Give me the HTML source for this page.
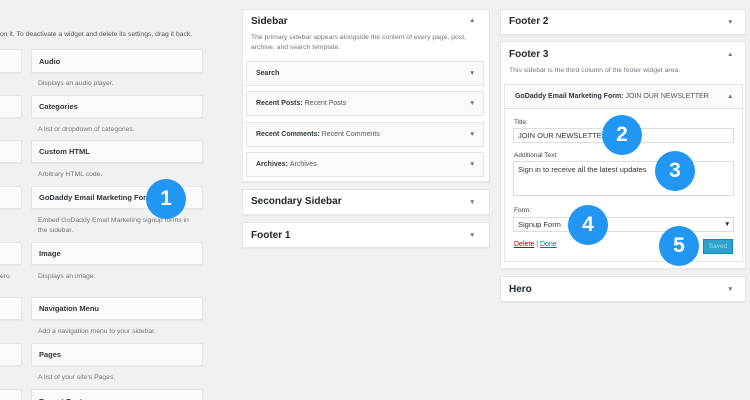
<!DOCTYPE html><html style="overflow:hidden;height:400px"><head><style>
*{box-sizing:border-box;margin:0;padding:0}
body{width:750px;height:400px;background:#f1f1f1;font-family:"Liberation Sans",sans-serif;position:relative;overflow:hidden;color:#23282d}
.a{position:absolute}
.wb{position:absolute;background:#fafafa;border:1px solid #e5e5e5;box-shadow:0 1px 1px rgba(0,0,0,.04);font-size:7.5px;font-weight:bold;color:#32373c;padding-left:7px;display:flex;align-items:center}
.d{position:absolute;font-size:6.8px;color:#72777c;line-height:10px}
.p{position:absolute;background:#fff;border:1px solid #e5e5e5;box-shadow:0 1px 1px rgba(0,0,0,.04)}
.h{position:absolute;font-size:10px;font-weight:bold;color:#23282d}
.ar{position:absolute;font-size:6.5px;color:#72777c}
.ib{position:absolute;background:#fafafa;border:1px solid #e5e5e5;font-size:7px;font-weight:bold;color:#32373c;padding-left:9px;display:flex;align-items:center}
.ib span{font-weight:normal;color:#555}
.c{position:absolute;width:40px;height:40px;border-radius:50%;background:#2196f3;color:#fff;font-weight:bold;font-size:21px;display:flex;align-items:center;justify-content:center}
.lbl{position:absolute;font-size:6.5px;color:#444}
.inp{position:absolute;background:#fff;border:1px solid #ddd;font-size:7.5px;color:#333;padding:3px 4px}
</style></head><body>
<div class="d" style="left:0;top:30px;color:#555">on it. To deactivate a widget and delete its settings, drag it back.</div>
<div class="wb" style="left:-5px;top:49px;width:27px;height:24px"></div>
<div class="wb" style="left:-5px;top:95px;width:27px;height:23px"></div>
<div class="wb" style="left:-5px;top:140px;width:27px;height:23px"></div>
<div class="wb" style="left:-5px;top:186px;width:27px;height:23px"></div>
<div class="wb" style="left:-5px;top:242px;width:27px;height:23px"></div>
<div class="d" style="left:0;top:272px">ero</div>
<div class="wb" style="left:-5px;top:297px;width:27px;height:23px"></div>
<div class="wb" style="left:-5px;top:343px;width:27px;height:23px"></div>
<div class="wb" style="left:-5px;top:389px;width:27px;height:23px"></div>
<div class="wb" style="left:31px;top:49px;width:172px;height:24px">Audio</div>
<div class="d" style="left:38px;top:79px">Displays an audio player.</div>
<div class="wb" style="left:31px;top:95px;width:172px;height:23px">Categories</div>
<div class="d" style="left:38px;top:125px">A list or dropdown of categories.</div>
<div class="wb" style="left:31px;top:140px;width:172px;height:23px">Custom HTML</div>
<div class="d" style="left:38px;top:170px">Arbitrary HTML code.</div>
<div class="wb" style="left:31px;top:186px;width:172px;height:23px">GoDaddy Email Marketing Form</div>
<div class="d" style="left:38px;top:216px;width:162px">Embed GoDaddy Email Marketing signup forms in the sidebar.</div>
<div class="wb" style="left:31px;top:242px;width:172px;height:23px">Image</div>
<div class="d" style="left:38px;top:272px">Displays an image.</div>
<div class="wb" style="left:31px;top:297px;width:172px;height:23px">Navigation Menu</div>
<div class="d" style="left:38px;top:327px">Add a navigation menu to your sidebar.</div>
<div class="wb" style="left:31px;top:343px;width:172px;height:23px">Pages</div>
<div class="d" style="left:38px;top:373px">A list of your site's Pages.</div>
<div class="wb" style="left:31px;top:389px;width:172px;height:23px;align-items:flex-start;padding-top:7px">Recent Posts</div>
<div class="c" style="left:146px;top:179px">1</div>
<div class="p" style="left:242px;top:9px;width:248px;height:173px"></div>
<div class="h" style="left:251px;top:16px">Sidebar</div>
<div class="ar" style="left:469px;top:17px">▲</div>
<div class="d" style="left:251px;top:33px;width:235px">The primary sidebar appears alongside the content of every page, post, archive, and search template.</div>
<div class="ib" style="left:246px;top:61px;width:238px;height:25px">Search</div>
<div class="ib" style="left:246px;top:91px;width:238px;height:25px">Recent Posts:&nbsp;<span>Recent Posts</span></div>
<div class="ib" style="left:246px;top:122px;width:238px;height:25px">Recent Comments:&nbsp;<span>Recent Comments</span></div>
<div class="ib" style="left:246px;top:152px;width:238px;height:25px">Archives:&nbsp;<span>Archives</span></div>
<div class="ar" style="left:469px;top:70px">▼</div><div class="ar" style="left:469px;top:100px">▼</div><div class="ar" style="left:469px;top:131px">▼</div><div class="ar" style="left:469px;top:161px">▼</div>
<div class="p" style="left:242px;top:189px;width:248px;height:26px"></div>
<div class="h" style="left:251px;top:196px">Secondary Sidebar</div><div class="ar" style="left:469px;top:199px">▼</div>
<div class="p" style="left:242px;top:222px;width:248px;height:26px"></div>
<div class="h" style="left:251px;top:230px">Footer 1</div><div class="ar" style="left:469px;top:232px">▼</div>
<div class="p" style="left:500px;top:9px;width:246px;height:26px"></div>
<div class="h" style="left:509px;top:16px">Footer 2</div><div class="ar" style="left:727px;top:19px">▼</div>
<div class="p" style="left:500px;top:41px;width:246px;height:228px"></div>
<div class="h" style="left:509px;top:49px">Footer 3</div><div class="ar" style="left:727px;top:51px">▲</div>
<div class="d" style="left:509px;top:66px">This sidebar is the third column of the footer widget area.</div>
<div class="a" style="left:504px;top:84px;width:239px;height:178px;background:#fff;border:1px solid #e5e5e5"></div>
<div class="ib" style="left:504px;top:84px;width:239px;height:25px;padding-left:10px">GoDaddy Email Marketing Form:&nbsp;<span>JOIN OUR NEWSLETTER</span></div>
<div class="ar" style="left:727px;top:93px">▲</div>
<div class="lbl" style="left:514px;top:119px">Title:</div>
<div class="inp" style="left:513px;top:128px;width:221px;height:15px;padding-top:2px">JOIN OUR NEWSLETTER</div>
<div class="lbl" style="left:514px;top:152px">Additional Text:</div>
<div class="inp" style="left:513px;top:161px;width:221px;height:35px">Sign in to receive all the latest updates</div>
<div class="lbl" style="left:514px;top:207px">Form:</div>
<div class="inp" style="left:513px;top:217px;width:221px;height:15px;padding-top:2px">Signup Form</div>
<div class="ar" style="left:724px;top:221px;color:#333">▼</div>
<div class="a" style="left:514px;top:241px;font-size:7px;color:#a00"><u>Delete</u> <span style="color:#555">|</span> <u style="color:#0073aa">Done</u></div>
<div class="a" style="left:703px;top:239px;width:30px;height:15px;background:#2ea2cc;border:1px solid #0e8ab0;color:#a4d4e8;font-size:6.5px;display:flex;align-items:center;justify-content:center">Saved</div>
<div class="p" style="left:500px;top:276px;width:246px;height:26px"></div>
<div class="h" style="left:509px;top:284px">Hero</div><div class="ar" style="left:727px;top:286px">▼</div>
<div class="c" style="left:602px;top:115px">2</div>
<div class="c" style="left:655px;top:151px">3</div>
<div class="c" style="left:568px;top:205px">4</div>
<div class="c" style="left:659px;top:226px">5</div>
</body></html>
